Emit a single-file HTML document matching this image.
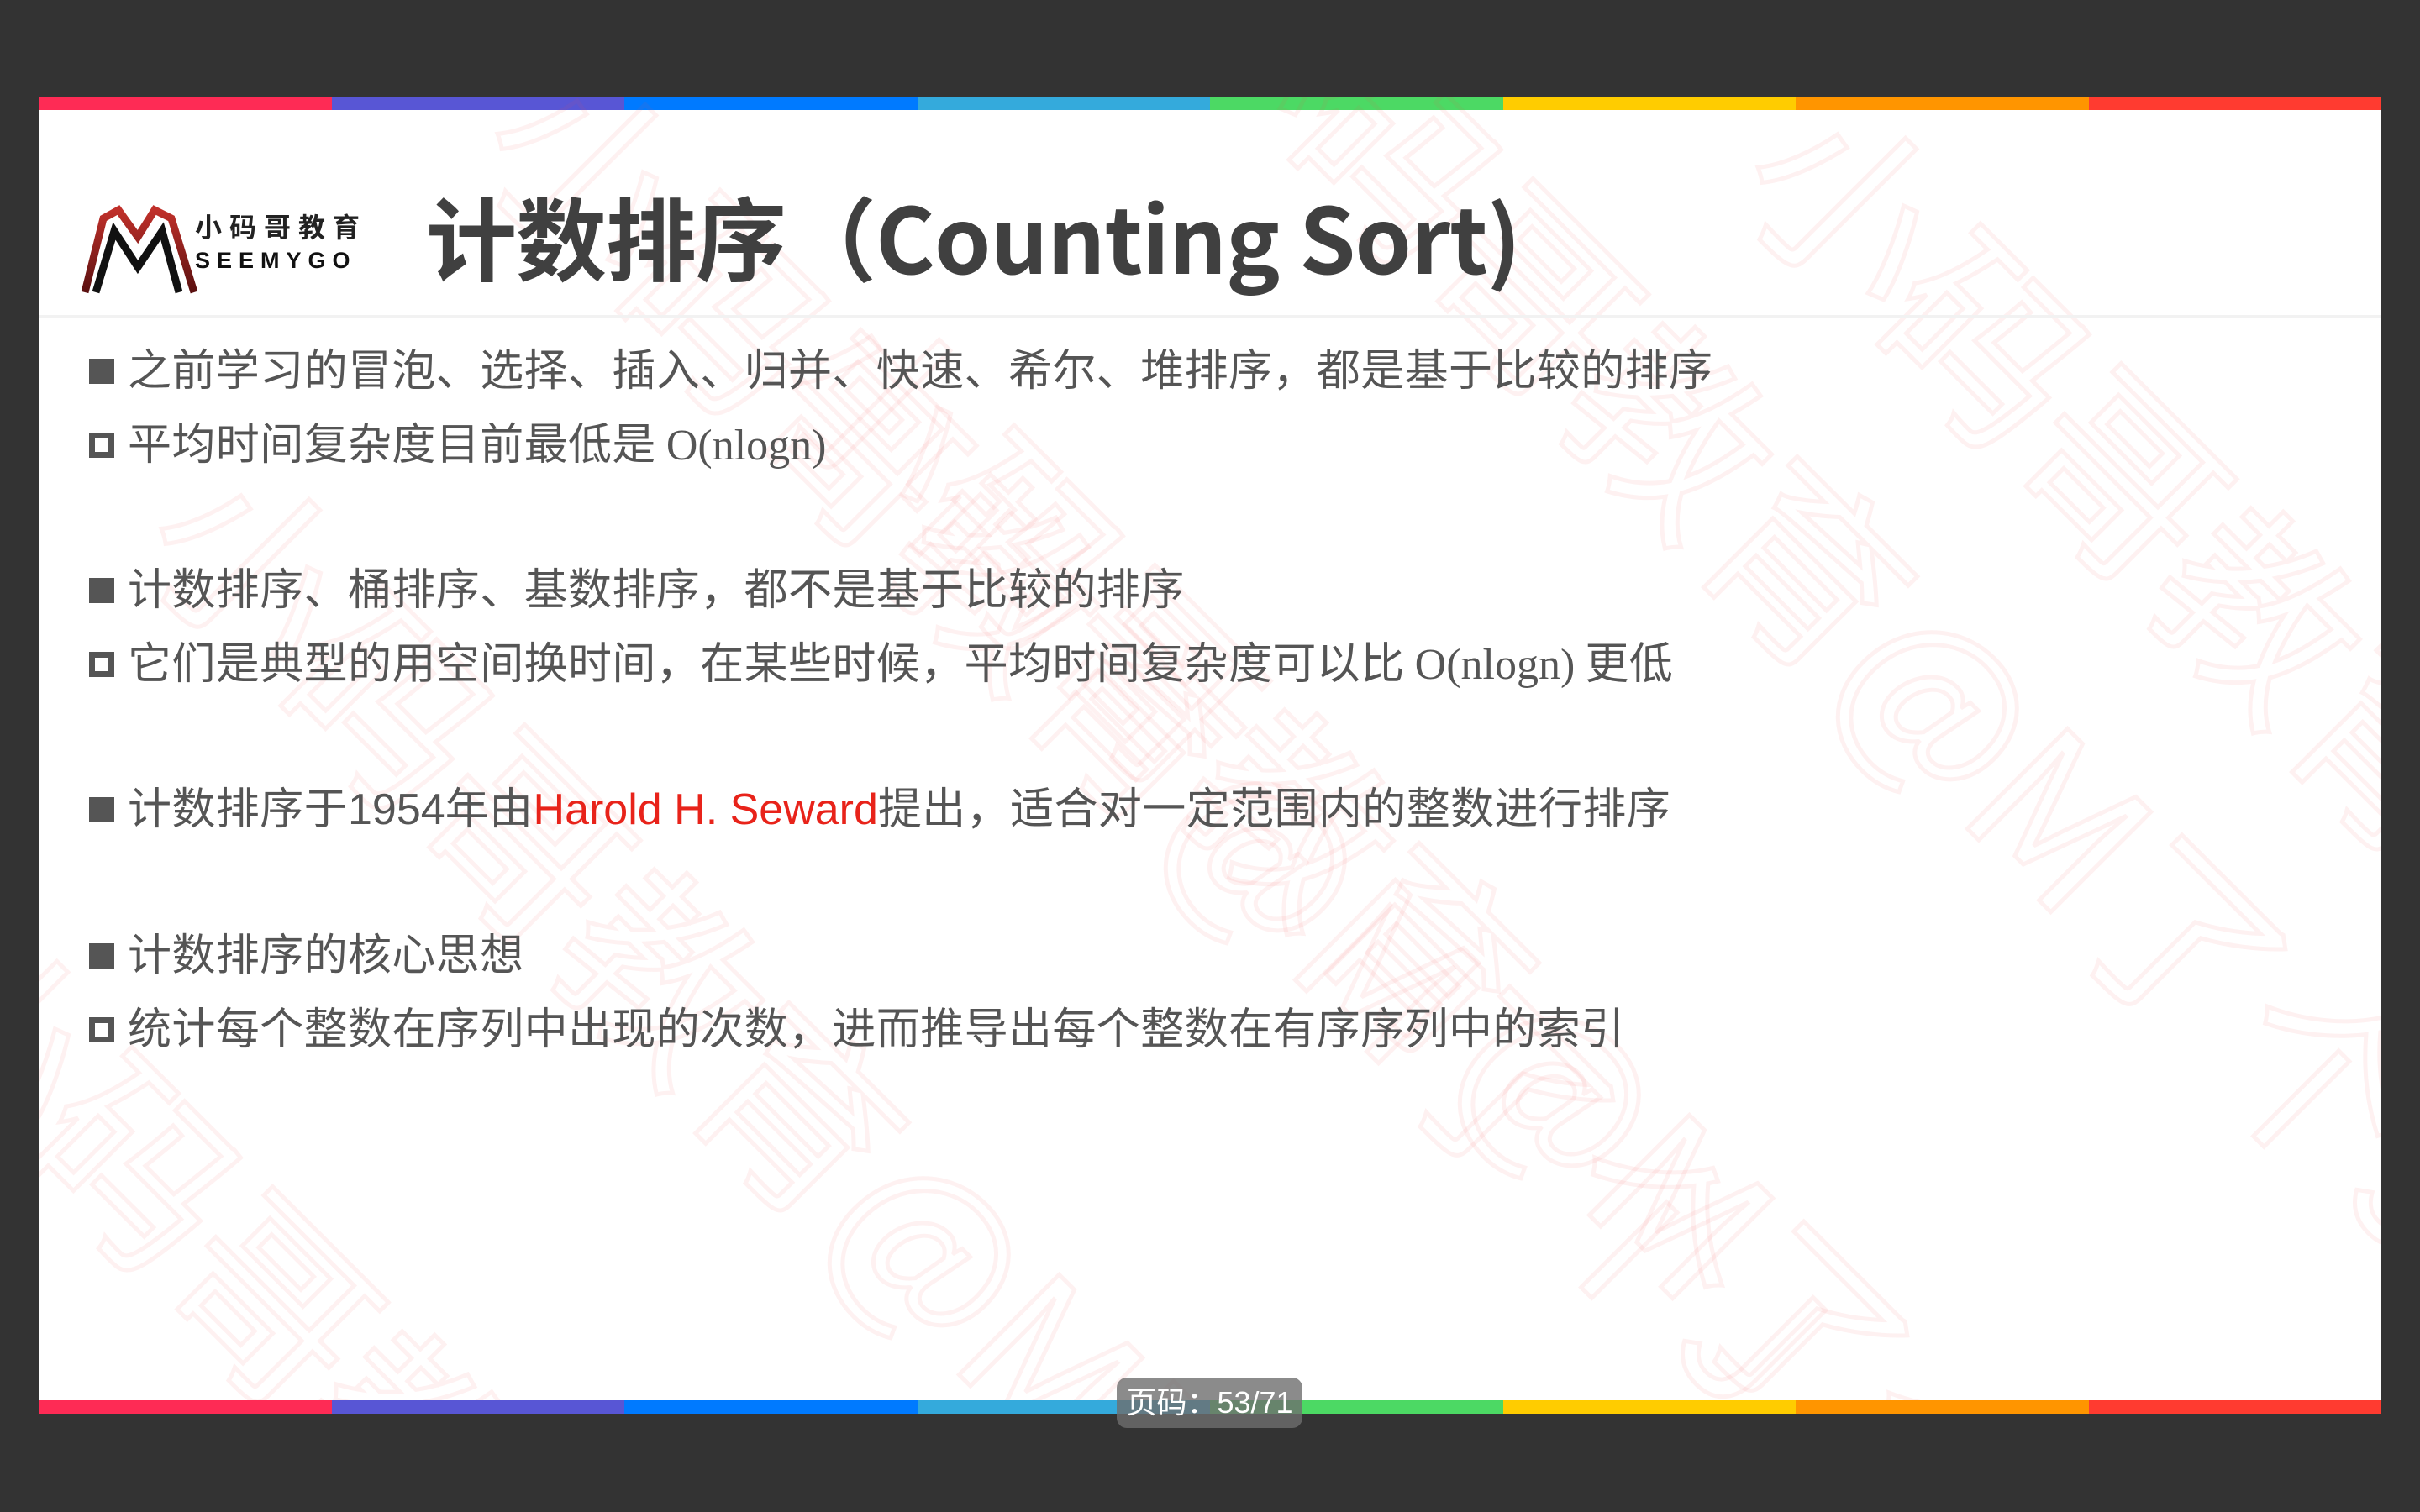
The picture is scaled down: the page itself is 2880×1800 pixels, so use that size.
<!DOCTYPE html>
<html><head><meta charset="utf-8"><style>
*{margin:0;padding:0;box-sizing:border-box}
html,body{width:2880px;height:1800px;background:#333;overflow:hidden;font-family:"Liberation Sans","Noto Sans CJK SC",sans-serif}
.slide{position:absolute;left:46px;top:115px;width:2788px;height:1568px;background:#fff;overflow:hidden}
.bar{position:absolute;left:0;width:2788px;height:16px;display:flex}
.bar div{flex:1}
.wm{position:absolute;font-family:"Noto Sans CJK SC",sans-serif;font-size:230px;color:transparent;-webkit-text-stroke:5px rgba(240,80,80,0.08);white-space:nowrap;transform-origin:0 0;transform:rotate(45deg)}
.title{position:absolute;left:461px;top:95px;font-size:108px;font-weight:bold;color:#404040;font-family:"Noto Sans CJK SC",sans-serif;letter-spacing:-1px;line-height:1.3}
.sep{position:absolute;left:0;top:260px;width:2788px;height:4px;background:#f2f2f2}
.ln{position:absolute;left:60px;font-size:52px;color:#555;white-space:nowrap;font-family:"Noto Sans CJK SC",sans-serif;line-height:1;letter-spacing:0.4px}
.ln .b{display:inline-block;width:30px;height:30px;background:#555;margin-right:16px;vertical-align:2px}
.ln .o{display:inline-block;width:30px;height:30px;border:7px solid #555;margin-right:16px;vertical-align:2px}
.serif{font-family:"Liberation Serif",serif;letter-spacing:0}
.red{color:#e8231a;font-family:"Liberation Sans",sans-serif;letter-spacing:0}
.lat{font-family:"Liberation Sans",sans-serif;letter-spacing:0}
.badge{position:absolute;left:1329px;top:1640px;width:221px;height:60px;border-radius:12px;background:rgba(110,110,110,0.8);color:#fff;font-size:36px;line-height:60px;text-align:center;font-family:"Liberation Sans","Noto Sans CJK SC",sans-serif}
</style></head><body>
<div class="slide">
<div class="bar" style="top:0"><div style="background:#fe2b55"></div><div style="background:#5856d5"></div><div style="background:#007aff"></div><div style="background:#34aadc"></div><div style="background:#4cd964"></div><div style="background:#ffcc00"></div><div style="background:#ff9500"></div><div style="background:#ff3b30"></div></div>
<div class="wm" style="left:700px;top:-120px">小码哥教育@M了个J</div>
<div class="wm" style="left:1500px;top:-300px">小码哥教育@M了个J</div>
<div class="wm" style="left:300px;top:350px">小码哥教育@M了个J</div>
<div class="wm" style="left:1050px;top:160px">小码哥教育@M了个J</div>
<div class="wm" style="left:2200px;top:-80px">小码哥教育@M了个J</div>
<div class="wm" style="left:0px;top:900px">小码哥教育@M了个J</div>
<svg style="position:absolute;left:40px;top:105px" width="150" height="135" viewBox="0 0 150 135">
<defs><linearGradient id="g" x1="0" y1="0" x2="0" y2="1"><stop offset="0" stop-color="#c0302a"/><stop offset="1" stop-color="#5a1010"/></linearGradient></defs>
<polyline points="15,128 37,40 55,30 78,62 98,30 118,40 145,128" fill="none" stroke="url(#g)" stroke-width="9"/>
<polyline points="28,128 50,55 78,98 107,55 127,128" fill="none" stroke="#111" stroke-width="9"/>
</svg>
<div style="position:absolute;left:186px;top:138px;font-size:32px;font-weight:bold;color:#222;letter-spacing:9px;font-family:'Noto Sans CJK SC',sans-serif;line-height:1">小码哥教育</div>
<div style="position:absolute;left:186px;top:182px;font-size:27px;font-weight:bold;color:#111;letter-spacing:8px;line-height:1">SEEMYGO</div>
<div class="title">计数排序（Counting Sort)</div>
<div class="sep"></div>
<div class="ln" style="top:296px"><span class="b"></span>之前学习的冒泡、选择、插入、归并、快速、希尔、堆排序，都是基于比较的排序</div>
<div class="ln" style="top:384px"><span class="o"></span>平均时间复杂度目前最低是 <span class="serif">O(nlogn)</span></div>
<div class="ln" style="top:557px"><span class="b"></span>计数排序、桶排序、基数排序，都不是基于比较的排序</div>
<div class="ln" style="top:645px"><span class="o"></span>它们是典型的用空间换时间，在某些时候，平均时间复杂度可以比 <span class="serif">O(nlogn)</span> 更低</div>
<div class="ln" style="top:818px"><span class="b"></span>计数排序于<span class="lat">1954</span>年由<span class="red">Harold H. Seward</span>提出，适合对一定范围内的整数进行排序</div>
<div class="ln" style="top:992px"><span class="b"></span>计数排序的核心思想</div>
<div class="ln" style="top:1080px"><span class="o"></span>统计每个整数在序列中出现的次数，进而推导出每个整数在有序序列中的索引</div>
<div class="bar" style="top:1552px"><div style="background:#fe2b55"></div><div style="background:#5856d5"></div><div style="background:#007aff"></div><div style="background:#34aadc"></div><div style="background:#4cd964"></div><div style="background:#ffcc00"></div><div style="background:#ff9500"></div><div style="background:#ff3b30"></div></div>
</div>
<div class="badge">页码：53/71</div>
</body></html>
